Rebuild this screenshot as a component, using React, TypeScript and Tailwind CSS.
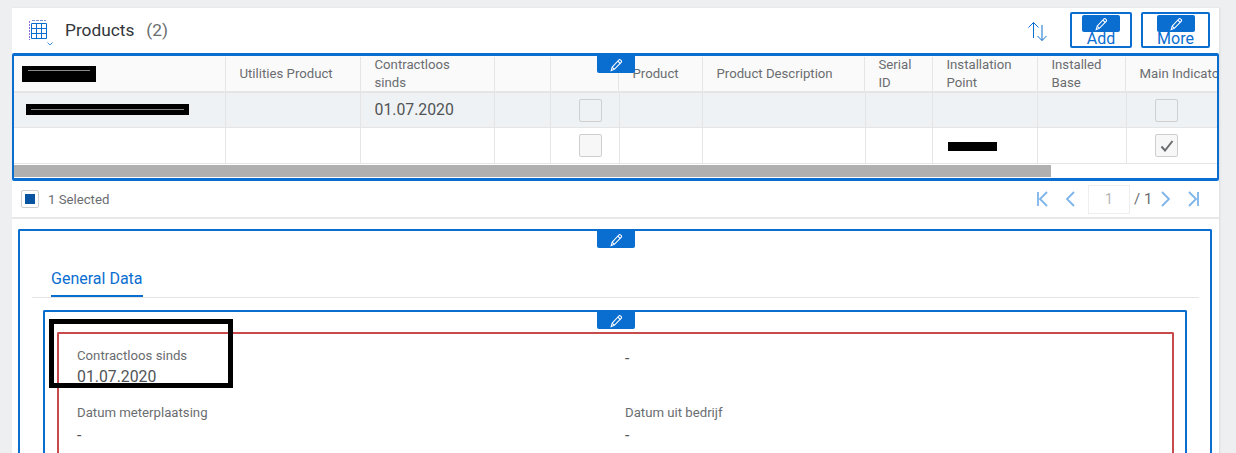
import React from "react";

const FONT = { fontFamily: 'Roboto, Lato, "Open Sans", sans-serif' };

function PencilIcon() {
  return (
    <svg width="14" height="14" viewBox="0 0 14 14" fill="none" stroke="#ffffff" strokeWidth="1.1">
      <path d="M3.2 9.2 9.8 2a1.2 1.2 0 0 1 1.7 -.1l.7.7a1.2 1.2 0 0 1 0 1.7L5.3 11.4 2.2 12.6 Z" fill="none" />
      <path d="M8.8 3.1l2.5 2.4M3.2 9.2l2.1 2.2" />
    </svg>
  );
}

function EditBadge({ className }: { className: string }) {
  return (
    <div className={`absolute z-10 flex h-[17px] w-[38px] items-center justify-center rounded-b-[2px] bg-[#0a6ed1] ${className}`}>
      <PencilIcon />
    </div>
  );
}

function ToolButton({ label, className }: { label: string; className: string }) {
  return (
    <button className={`flex h-[36px] flex-col items-center rounded-[2px] border-2 border-[#0a6ed1] bg-white ${className}`}>
      <span className="mt-px flex h-[17px] w-[38px] items-center justify-center rounded-[2px] bg-[#0a6ed1]">
        <PencilIcon />
      </span>
      <span className="text-[16px] leading-[13px] text-[#0a6ed1]">{label}</span>
    </button>
  );
}

function TableIcon() {
  return (
    <div className="relative h-[26px] w-[26px]">
      <svg width="22" height="22" viewBox="0 0 22 22" fill="none">
        <path d="M1.500 1v19" stroke="#8a6bd8" strokeWidth="1" strokeDasharray="2 1" />
        <path d="M4 .5h14" stroke="#6f8fd8" strokeWidth="1" strokeDasharray="3 1" />
        <path d="M3.500 3.500h15v15h-15zM3.500 8.500h15M3.500 13.500h15M8.500 3.500v15M13.500 3.500v15" stroke="#0a6ed1" strokeWidth="1" />
      </svg>
      <svg className="absolute left-[19px] top-[22px]" width="6" height="4" viewBox="0 0 6 4" fill="none">
        <path d="M.5.5 3 3 5.500.5" stroke="#0a6ed1" strokeWidth="0.8" />
      </svg>
    </div>
  );
}

function SortIcon() {
  return (
    <svg width="22" height="21" viewBox="0 0 22 21" fill="none" stroke="#0a6ed1" strokeWidth="1">
      <path d="M6.500 17V1.500M1.500 6.500l5 -5 5 5" />
      <path d="M15 4v15.500M10.500 15l4.500 4.500 4.500 -4.500" />
    </svg>
  );
}

function Checkbox({ tone, checked }: { tone: string; checked?: boolean }) {
  return (
    <span className={`flex h-[23px] w-[23px] items-center justify-center rounded-[2px] border border-[#cfcfcf] ${tone}`}>
      {checked && (
        <svg width="14" height="12" viewBox="0 0 14 12" fill="none">
          <path d="M1.500 6.500 5 10.500 12.500 1" stroke="#6a6d70" strokeWidth="2" />
        </svg>
      )}
    </span>
  );
}

function PageIcon({ d, width }: { d: string; width: number }) {
  return (
    <svg width={width} height="16" viewBox={`0 0 ${width} 16`} fill="none" stroke="#7db4ea" strokeWidth="1.800">
      <path d={d} />
    </svg>
  );
}

const HEAD_COLS = "grid-cols-[212px_135px_134px_56px_68px_84px_162px_68px_105px_88px_91px]";
const ROW_COLS = "grid-cols-[212px_135px_134px_56px_69px_83px_163px_67px_105px_89px_90px]";

function HeadCell({ children, last }: { children?: React.ReactNode; last?: boolean }) {
  return (
    <div className={`mt-px flex items-center whitespace-nowrap pl-[13.500px] text-[13.200px] leading-[18px] text-[#6a6d70] ${last ? "" : "border-r border-[#e5e5e5]"}`}>
      <div>{children}</div>
    </div>
  );
}

function RowCell({ children, box, last }: { children?: React.ReactNode; box?: boolean; last?: boolean }) {
  return (
    <div className={`flex items-center ${box ? "pl-[28px]" : "pl-[13.500px]"} ${last ? "" : "border-r border-[#e5e5e5]"}`}>
      {children}
    </div>
  );
}

function Field({ label, value, gap }: { label?: string; value: string; gap: string }) {
  return (
    <div className="h-[57px]">
      {label && <div className="text-[13.200px] leading-[16px] text-[#6a6d70]">{label}</div>}
      <div className={`text-[15.800px] leading-[20px] text-[#515456] ${gap}`}>{value}</div>
    </div>
  );
}

function Redaction({ className, line }: { className: string; line: string }) {
  return (
    <span className={`relative block bg-black ${className}`}>
      <span className={`absolute block h-px bg-[#8a8a8a] ${line}`} />
    </span>
  );
}

export default function App() {
  return (
    <div style={FONT} className="h-[453px] w-[1236px] overflow-hidden bg-[#edeff0] pl-[12px] pt-[8px]">
      <div className="h-[600px] w-[1207px] bg-white shadow-[1px_0_2px_rgba(0,0,0,0.08)]">
        {/* toolbar */}
        <div className="flex h-[45px] items-center pr-[9px]">
          <div className="ml-[16px] mt-[5px]">
            <TableIcon />
          </div>
          <div className="mb-[2px] ml-[11px] text-[17.300px] leading-[24px] text-[#32363a]">Products</div>
          <div className="mb-[2px] ml-[12px] text-[17.300px] leading-[24px] text-[#6a6d70]">(2)</div>
          <div className="ml-auto mr-[21px] mt-[2px]">
            <SortIcon />
          </div>
          <ToolButton label="Add" className="mt-[-1px] w-[62px]" />
          <ToolButton label="More" className="ml-[9px] mt-[-1px] w-[69px]" />
        </div>

        {/* table */}
        <div className="relative h-[128px] overflow-hidden rounded-[2px] border-x-2 border-y-[3px] border-[#0a6ed1]">
          <EditBadge className="left-[583px] top-0" />
          <div className={`grid h-[37px] grid-rows-[35px] border-b-2 border-[#e5e5e5] bg-[#fafafa] ${HEAD_COLS}`}>
            <HeadCell>
              <Redaction className="ml-[-5.500px] h-[16px] w-[74px]" line="left-[6px] top-[4px] w-[62px]" />
            </HeadCell>
            <HeadCell>Utilities Product</HeadCell>
            <HeadCell>
              Contractloos
              <br />
              sinds
            </HeadCell>
            <HeadCell />
            <HeadCell />
            <HeadCell>Product</HeadCell>
            <HeadCell>Product Description</HeadCell>
            <HeadCell>
              Serial
              <br />
              ID
            </HeadCell>
            <HeadCell>
              Installation
              <br />
              Point
            </HeadCell>
            <HeadCell>
              Installed
              <br />
              Base
            </HeadCell>
            <HeadCell last>Main Indicator</HeadCell>
          </div>
          <div className={`grid h-[35px] border-b border-[#e5e5e5] bg-[#eff2f4] ${ROW_COLS}`}>
            <RowCell>
              <Redaction className="mb-[2px] ml-[-1.500px] h-[11px] w-[163px]" line="left-[5px] top-[5px] w-[153px]" />
            </RowCell>
            <RowCell />
            <RowCell>
              <span className="text-[15.800px] text-[#515456]">01.07.2020</span>
            </RowCell>
            <RowCell />
            <RowCell box>
              <Checkbox tone="bg-transparent" />
            </RowCell>
            <RowCell />
            <RowCell />
            <RowCell />
            <RowCell />
            <RowCell />
            <RowCell box last>
              <Checkbox tone="bg-transparent" />
            </RowCell>
          </div>
          <div className={`grid h-[36px] border-b border-[#e5e5e5] bg-white ${ROW_COLS}`}>
            <RowCell />
            <RowCell />
            <RowCell />
            <RowCell />
            <RowCell box>
              <Checkbox tone="bg-[#f7f7f7]" />
            </RowCell>
            <RowCell />
            <RowCell />
            <RowCell />
            <RowCell>
              <span className="ml-[1.500px] mt-[2px] block h-[9px] w-[49px] bg-black" />
            </RowCell>
            <RowCell />
            <RowCell box last>
              <Checkbox tone="bg-[#f7f7f7]" checked />
            </RowCell>
          </div>
          <div className="mt-px h-[12px] w-[1037px] bg-[#b0b0b0]" />
        </div>

        {/* selection footer */}
        <div className="flex h-[38px] items-center border-b-2 border-[#e8e8e8] pl-[9px] pr-[20px]">
          <span className="flex h-[18px] w-[18px] items-center justify-center rounded-[2px] border border-[#cfcfcf]">
            <span className="block h-[10px] w-[10px] bg-[#0854a0]" />
          </span>
          <span className="ml-[9px] mt-px text-[13.200px] text-[#6a6d70]">1 Selected</span>
          <div className="ml-auto flex items-center">
            <PageIcon width={11} d="M1 1v14M10 1 3 8l7 7" />
            <span className="ml-[18px]">
              <PageIcon width={9} d="M8 1 1 8l7 7" />
            </span>
            <span className="ml-[13px] flex h-[29px] w-[42px] items-center justify-center border border-[#eeeeee] text-[14px] text-[#b5b5b5]">1</span>
            <span className="ml-[4px] w-[16px] whitespace-nowrap text-[15px] text-[#6a6d70]">/ 1</span>
            <span className="ml-[11px]">
              <PageIcon width={9} d="M1 1l7 7 -7 7" />
            </span>
            <span className="ml-[18px]">
              <PageIcon width={11} d="M1 1l7 7 -7 7M10 1v14" />
            </span>
          </div>
        </div>

        {/* section */}
        <div className="relative ml-[6px] mr-[7px] mt-[10px] rounded-t-[2px] border-x-2 border-t-2 border-[#0a6ed1] pb-[40px]">
          <EditBadge className="left-[577px] top-0" />
          <div className="mx-[12px] mr-[11px] flex h-[67px] items-end border-b border-[#e5e5e5]">
            <div className="ml-[19px] border-b-2 border-[#0a6ed1] pb-[6px] text-[16px] leading-[20px] text-[#0a6ed1]">General Data</div>
          </div>

          <div className="relative mx-[23px] mt-[12px] rounded-t-[2px] border-x-2 border-t-2 border-[#0a6ed1] pb-[40px]">
            <EditBadge className="left-[552px] top-0" />
            <div className="ml-[12px] mr-[11px] mt-[20px] rounded-t-[2px] border-x-2 border-t-2 border-[#c94a4a] pb-[40px] pl-[18px] pt-[14px]">
              <div className="grid grid-cols-[548px_1fr]">
                <Field label="Contractloos sinds" value="01.07.2020" gap="mt-[3px]" />
                <Field value="-" gap="mt-px" />
                <Field label="Datum meterplaatsing" value="-" gap="mt-[5px]" />
                <Field label="Datum uit bedrijf" value="-" gap="mt-[5px]" />
              </div>
            </div>
            {/* black annotation box */}
            <div className="absolute left-[4px] top-[7px] h-[69px] w-[184px] border-[5px] border-black" />
          </div>
        </div>
      </div>
    </div>
  );
}
